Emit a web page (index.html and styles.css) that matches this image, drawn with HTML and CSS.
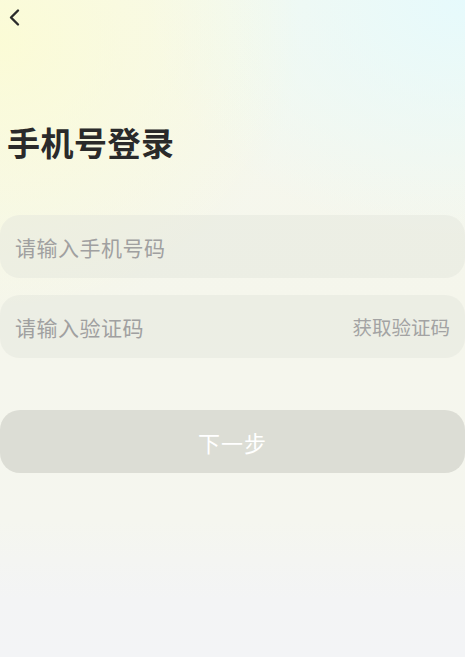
FILE: index.html
```html
<!DOCTYPE html>
<html lang="zh">
<head>
<meta charset="utf-8">
<title>手机号登录</title>
<link rel="stylesheet" href="styles.css">
</head>
<body>
<div class="page">
  <div class="topbar">
    <svg class="back" width="24" height="30" viewBox="0 0 24 30"><polyline points="18,10.5 11,17.5 18,24.5" fill="none" stroke="#2b2b2b" stroke-width="2.4" stroke-linecap="round" stroke-linejoin="round"/></svg>
  </div>
  <h1 class="title">手机号登录</h1>
  <div class="form">
    <div class="field"><span class="ph">请输入手机号码</span></div>
    <div class="field"><span class="ph">请输入验证码</span><span class="code">获取验证码</span></div>
    <div class="btn">下一步</div>
  </div>
</div>
</body>
</html>
```
FILE: styles.css
```css
html, body { margin: 0; padding: 0; }
body {
  width: 465px;
  height: 657px;
  overflow: hidden;
  font-family: "Noto Sans CJK SC", "Noto Sans", sans-serif;
  background:
    radial-gradient(ellipse 300px 280px at 0px 40px, rgba(252,252,210,0.85), rgba(252,252,210,0) 100%),
    radial-gradient(ellipse 320px 240px at 465px 0px, rgba(230,250,252,1), rgba(230,250,252,0) 100%),
    linear-gradient(to bottom, #f6f8ee 0px, #f5f6ec 300px, #f5f6ef 520px, #f3f4f5 600px, #f3f4f6 657px);
}
.page { display: flex; flex-direction: column; }
.topbar { height: 30px; display: flex; align-items: flex-start; }
.back { display: block; }
.title {
  margin: 89px 0 0 7px;
  font-size: 33px;
  line-height: 46px;
  font-weight: 700;
  color: #2a2a2a;
  letter-spacing: 0.5px;
}
.form { margin-top: 50px; display: flex; flex-direction: column; gap: 17px; }
.field {
  height: 63px;
  border-radius: 20px;
  background: rgba(226,228,220,0.45);
  display: flex;
  align-items: center;
  justify-content: space-between;
  padding: 0 15px;
}
.ph { font-size: 21px; color: #a0a0a0; letter-spacing: 0.5px; }
.code { font-size: 19.5px; color: #a3a3a3; }
.btn {
  margin-top: 35px;
  height: 63px;
  border-radius: 20px;
  background: #dcddd5;
  color: #ffffff;
  font-size: 22px;
  display: flex;
  align-items: center;
  justify-content: center;
  letter-spacing: 1px;
}
```
